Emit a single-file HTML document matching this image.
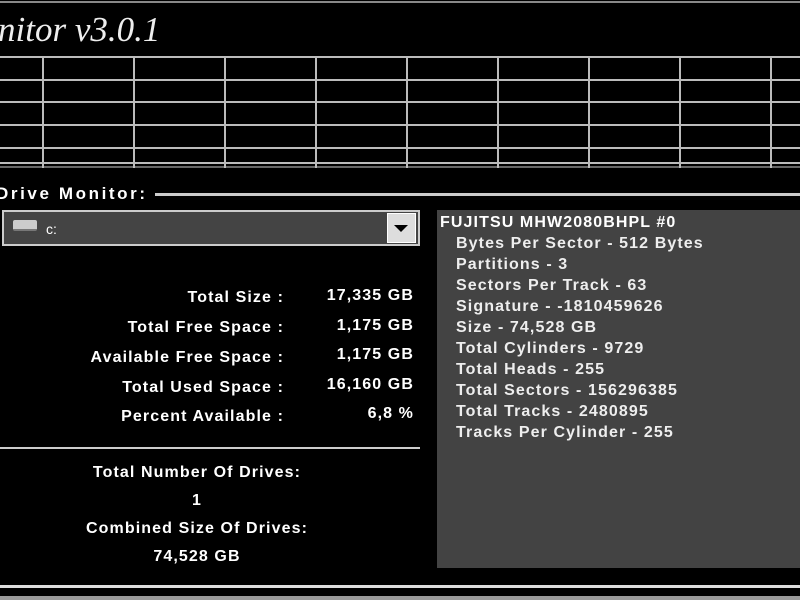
<!DOCTYPE html>
<html><head><style>
body{margin:0;width:800px;height:600px;background:#000;overflow:hidden;position:relative;font-family:"Liberation Sans",sans-serif;color:#fff}
.a{position:absolute}
.h{position:absolute;height:2px;background:#bbb}
.v{position:absolute;width:2px;background:#bbb}
.lbl,.val,.c,.p,.t{font-weight:bold;font-size:16px;letter-spacing:1.1px}
.lbl{position:absolute;text-align:right;width:284px;left:0}
.val{position:absolute;text-align:right;width:414px;left:0}
.c{position:absolute;text-align:center;width:394px;left:0}
.p{position:absolute;left:456px;color:#eee}
</style></head><body>
<div class="h" style="left:0;top:1px;width:800px;background:#888"></div>
<div class="a" style="left:-2px;top:10px;font-family:'Liberation Serif',serif;font-style:italic;font-size:35px;color:#eee">nitor v3.0.1</div>
<div class="h" style="left:0;top:56px;width:800px"></div>
<div class="h" style="left:0;top:79px;width:800px"></div>
<div class="h" style="left:0;top:101px;width:800px"></div>
<div class="h" style="left:0;top:124px;width:800px"></div>
<div class="h" style="left:0;top:147px;width:800px"></div>
<div class="h" style="left:0;top:162px;width:800px"></div>
<div class="h" style="left:0;top:166px;width:800px;background:#666"></div>
<div class="v" style="left:42px;top:56px;height:112px"></div>
<div class="v" style="left:133px;top:56px;height:112px"></div>
<div class="v" style="left:224px;top:56px;height:112px"></div>
<div class="v" style="left:315px;top:56px;height:112px"></div>
<div class="v" style="left:406px;top:56px;height:112px"></div>
<div class="v" style="left:497px;top:56px;height:112px"></div>
<div class="v" style="left:588px;top:56px;height:112px"></div>
<div class="v" style="left:679px;top:56px;height:112px"></div>
<div class="v" style="left:770px;top:56px;height:112px"></div>
<div class="a" style="left:-4px;top:184px;font-weight:bold;font-size:17px;letter-spacing:2.6px">Drive Monitor:</div>
<div class="h" style="left:155px;top:193px;width:645px;height:3px;background:#ccc"></div>
<div class="a" style="left:2px;top:210px;width:414px;height:32px;background:#444;border:2px solid #ccc"></div>
<div class="a" style="left:13px;top:220px;width:24px;height:9px;background:#ccc;border-radius:2px;border-bottom:2px solid #777"></div>
<div class="a" style="left:46px;top:221px;font-size:14px">c:</div>
<div class="a" style="left:387px;top:213px;width:27px;height:28px;background:#ddd;border:1px solid #fff"></div>
<div class="a" style="left:394px;top:225px;width:0;height:0;border-left:7px solid transparent;border-right:7px solid transparent;border-top:7px solid #000"></div>
<div class="lbl" style="top:289px">Total Size :</div>
<div class="lbl" style="top:319px">Total Free Space :</div>
<div class="lbl" style="top:349px">Available Free Space :</div>
<div class="lbl" style="top:379px">Total Used Space :</div>
<div class="lbl" style="top:408px">Percent Available :</div>
<div class="val" style="top:287px">17,335 GB</div>
<div class="val" style="top:317px">1,175 GB</div>
<div class="val" style="top:346px">1,175 GB</div>
<div class="val" style="top:376px">16,160 GB</div>
<div class="val" style="top:405px">6,8 %</div>
<div class="h" style="left:0;top:447px;width:420px;background:#ccc"></div>
<div class="c" style="top:464px">Total Number Of Drives:</div>
<div class="c" style="top:492px">1</div>
<div class="c" style="top:520px">Combined Size Of Drives:</div>
<div class="c" style="top:548px">74,528 GB</div>
<div class="a" style="left:437px;top:210px;width:363px;height:358px;background:#434343"></div>
<div class="a t" style="left:440px;top:214px">FUJITSU MHW2080BHPL #0</div>
<div class="p" style="top:235px">Bytes Per Sector - 512 Bytes</div>
<div class="p" style="top:256px">Partitions - 3</div>
<div class="p" style="top:277px">Sectors Per Track - 63</div>
<div class="p" style="top:298px">Signature - -1810459626</div>
<div class="p" style="top:319px">Size - 74,528 GB</div>
<div class="p" style="top:340px">Total Cylinders - 9729</div>
<div class="p" style="top:361px">Total Heads - 255</div>
<div class="p" style="top:382px">Total Sectors - 156296385</div>
<div class="p" style="top:403px">Total Tracks - 2480895</div>
<div class="p" style="top:424px">Tracks Per Cylinder - 255</div>
<div class="h" style="left:0;top:585px;width:800px;height:3px;background:#ddd"></div>
<div class="h" style="left:0;top:596px;width:800px;height:4px;background:#999"></div>
</body></html>
